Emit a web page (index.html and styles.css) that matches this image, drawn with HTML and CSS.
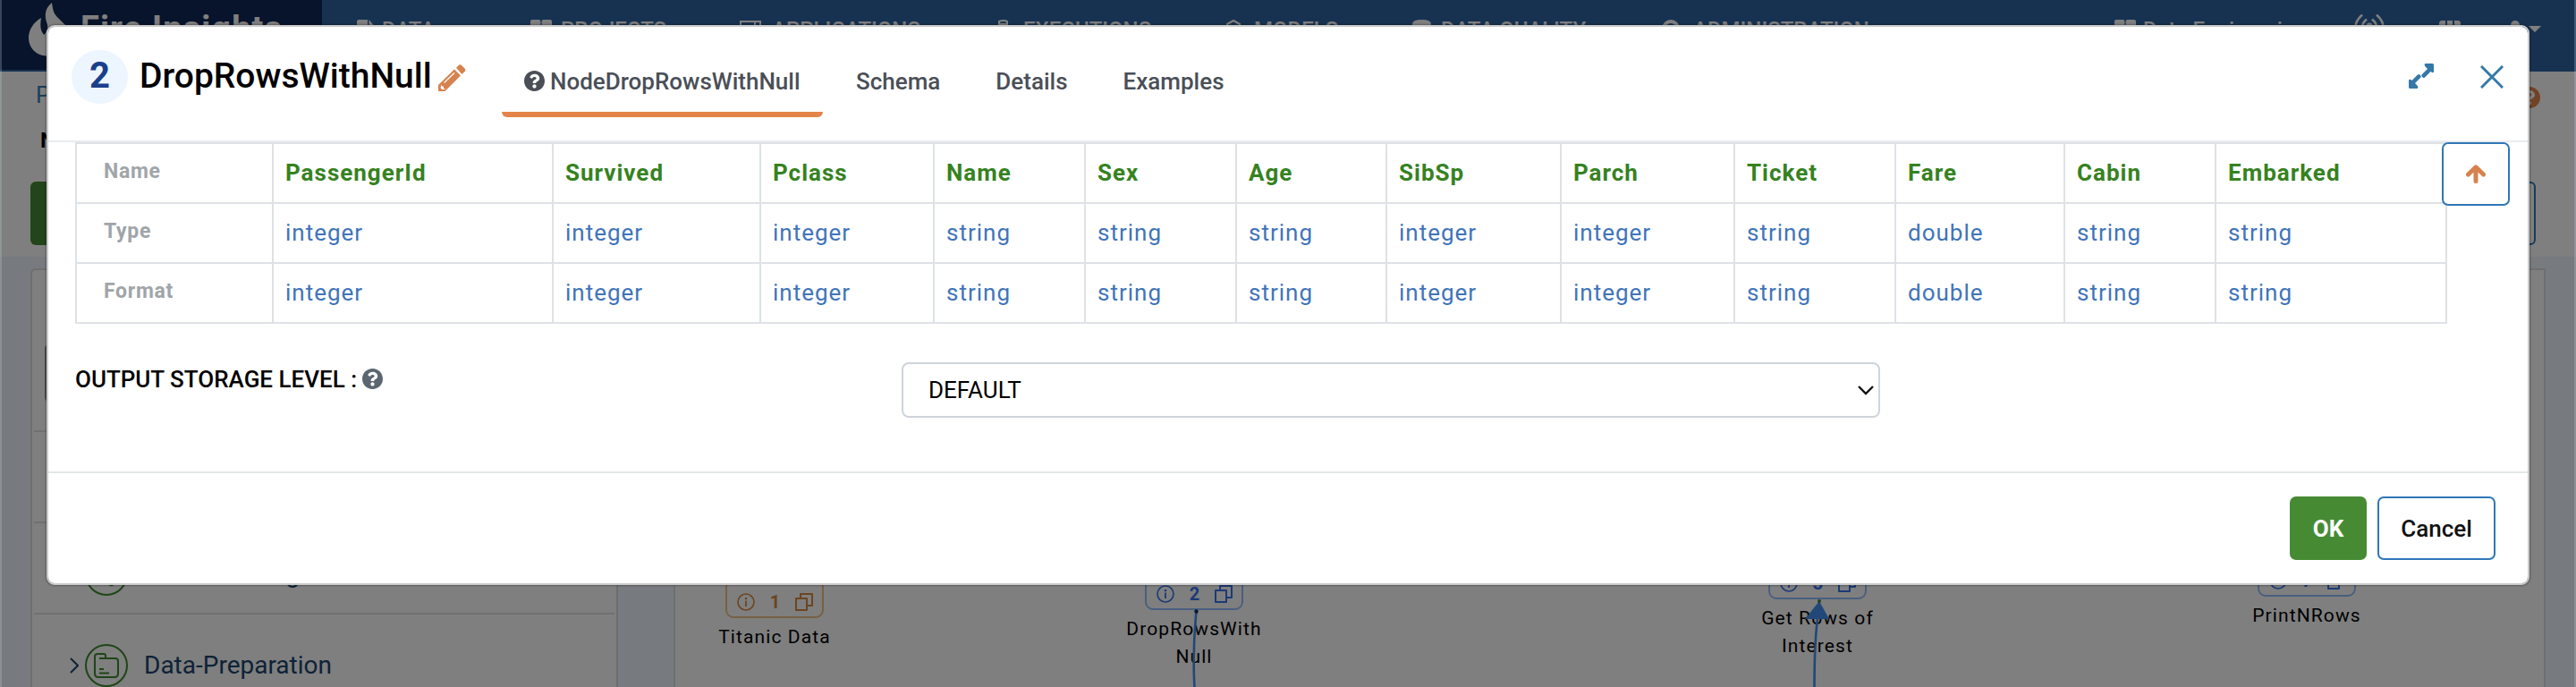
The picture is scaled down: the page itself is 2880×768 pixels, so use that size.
FILE: index.html
```html
<!DOCTYPE html>
<html lang="en">
<head>
<meta charset="utf-8">
<title>Fire Insights</title>
<link rel="stylesheet" href="styles.css">
</head>
<body>
<svg class="defs" width="0" height="0" aria-hidden="true">
  <symbol id="question" viewBox="8 8 496 496"><path d="M504 256c0 136.997-111.043 248-248 248S8 392.997 8 256C8 119.083 119.043 8 256 8s248 111.083 248 248zM262.655 90c-54.497 0-89.255 22.957-116.549 63.758-3.536 5.286-2.353 12.415 2.715 16.258l34.699 26.31c5.205 3.947 12.621 3.008 16.665-2.122 17.864-22.658 30.113-35.797 57.303-35.797 20.429 0 45.698 13.148 45.698 32.958 0 14.976-12.363 22.667-32.534 33.976C247.128 238.528 216 254.941 216 296v4c0 6.627 5.373 12 12 12h56c6.627 0 12-5.373 12-12v-1.333c0-28.462 83.186-29.647 83.186-106.667 0-58.002-60.165-102-116.531-102zM256 338c-25.365 0-46 20.635-46 46 0 25.364 20.635 46 46 46s46-20.636 46-46c0-25.364-20.635-46-46-46z"/></symbol>
  <symbol id="info" viewBox="0 0 20 20"><circle cx="10" cy="10" r="9" fill="none" stroke="currentColor" stroke-width="1.6"/><path d="M9.1 8.5h1.8v6.5H9.1zM8.9 5h2.2v2.2H8.9z"/></symbol>
  <symbol id="copy" viewBox="0 0 20 20"><path d="M1 6h12v13H1zM6 5V1h13v13h-5" fill="none" stroke="currentColor" stroke-width="2" stroke-linejoin="round"/></symbol>
  <symbol id="windows" viewBox="0 0 24 22"><rect width="11.4" height="10" rx="2"/><rect x="12.6" width="11.4" height="10" rx="2"/><rect y="11.5" width="11.4" height="10" rx="2"/><rect x="12.6" y="11.5" width="11.4" height="10" rx="2"/></symbol>
</svg>

<div class="page">
  <header class="topbar">
    <div class="brand">
      <svg class="flame" viewBox="0 0 52 60"><path d="M26 0c-8 6-8.500 15-5.500 23 1.500 4 .5 8-3 13-4-4-5-9-3.500-19C5 22 0 31 0 39c0 12 9 20.500 21 20.500S52 52 46 32C43 24 31 18 28 10c-1-3-1.500-7-2-10z"/></svg>
      <span class="brand-name">Fire Insights</span>
    </div>
    <nav class="menu">
      <a class="menu-item"><svg width="20" height="24" viewBox="0 0 20 24"><path d="M1.500 0H12v9h8v15H0V1.500zM13.500 0 20 7.500h-6.500z"/></svg>DATA</a>
      <a class="menu-item"><svg width="26" height="22" viewBox="0 0 26 22"><use href="#windows" width="24" height="22"/></svg>PROJECTS</a>
      <a class="menu-item"><svg width="28" height="22" viewBox="0 0 28 22"><path d="M1 2h22v18H1zM1 7h22M17 2v5" fill="none" stroke="currentColor" stroke-width="2"/></svg>APPLICATIONS</a>
      <a class="menu-item"><svg width="20" height="24" viewBox="0 0 20 24"><path d="M1 2q5-2 9 0v20H1zM1 5h9" fill="none" stroke="currentColor" stroke-width="2"/></svg>EXECUTIONS</a>
      <a class="menu-item"><svg width="23" height="22" viewBox="0 0 23 22"><path d="m8 1 7 4v9l-7 4-7-4V5zM4.500 6.500 8 8.500l3.500-2" fill="none" stroke="currentColor" stroke-width="2.200"/></svg>MODELS</a>
      <a class="menu-item"><svg width="24" height="24" viewBox="0 0 24 24"><path d="M0 5q0-5 10.500-5T21 5v14q0 4-10.500 4T0 19z"/></svg>DATA QUALITY</a>
      <a class="menu-item"><svg width="28" height="24" viewBox="0 0 28 24"><circle cx="11" cy="10" r="8" fill="none" stroke="currentColor" stroke-width="4"/></svg>ADMINISTRATION</a>
      <a class="menu-item"><svg width="24" height="22" viewBox="0 0 24 22"><use href="#windows" width="24" height="22"/></svg>Data Engineering</a>
      <a class="menu-item signal"><svg width="34" height="30" viewBox="0 0 34 30"><g fill="none" stroke="currentColor" stroke-width="2.600"><path d="M9 .5Q-6 14 9 27.500M25 .5q15 13.500 0 27M14 5.500q-10 8.500 0 17M20 5.500q10 8.500 0 17"/></g><circle cx="17" cy="13" r="3.500"/></svg></a>
      <a class="menu-item"><svg width="24" height="24" viewBox="0 0 24 24"><path d="M2 1h5v6H0V3zM9 1h6v6H9zM17 1h5l2 2v4h-7zM0 9h7v6H0zM9 9h6v6H9zM17 9h7v6h-7z"/></svg></a>
      <a class="menu-item user"><svg width="34" height="24" viewBox="0 0 34 24"><circle cx="5" cy="5" r="5"/><path d="M0 24v-8q5-6 10 0v8zM20 6h14l-7 7z"/></svg></a>
    </nav>
  </header>

  <section class="toolbar">
    <div class="crumbs"><span>Projects</span><svg class="crumb-help" width="24" height="24"><use href="#question"/></svg></div>
    <div class="flow-name">NewWorkflow</div>
    <div class="actions"><span class="action-solid"></span><span class="action-line"></span></div>
  </section>

  <main class="workspace-area">
    <aside class="processors">
      <div class="search"><span class="search-box"></span></div>
      <div class="category"></div>
      <div class="category">
        <svg class="chevron" width="10" height="18" viewBox="0 0 10 18"><path d="m1 1 8 8-8 8" fill="none" stroke="currentColor" stroke-width="2"/></svg>
        <svg class="category-icon" width="48" height="48" viewBox="0 0 48 48" stroke="currentColor" stroke-width="2"><circle cx="24" cy="24" r="23"/><path d="M15 33h18M27 35q3 3 6-1"/></svg>
        <span>Data-Cleaning</span>
      </div>
      <div class="category">
        <svg class="chevron" width="10" height="18" viewBox="0 0 10 18"><path d="m1 1 8 8-8 8" fill="none" stroke="currentColor" stroke-width="2"/></svg>
        <svg class="category-icon" width="48" height="48" viewBox="0 0 48 48" stroke="currentColor" stroke-width="2"><circle cx="24" cy="24" r="23"/><path d="M16 16h18q3 0 3 3v14q0 4-4 4H15q-4 0-4-4V14q0-3 3-3h7q2 0 2 2v3M16 28h5M16 32.500h11"/></svg>
        <span>Data-Preparation</span>
      </div>
    </aside>
    <div class="canvas">
      <svg class="links" width="2089" height="467" viewBox="755 301 2089 467">
        <path d="M1337.500 682C1336 700 1333 725 1335.500 768" fill="none" stroke="#4290f0" stroke-width="2.600"/>
        <path d="M2032 690C2029 715 2028.500 740 2028.500 768" fill="none" stroke="#4290f0" stroke-width="2.600"/>
        <path d="M2034 671 2045 691 2018 691z" fill="#4290f0"/>
        <circle cx="1337.500" cy="682.500" r="2.200" fill="#10305c"/><circle cx="2034" cy="671" r="2" fill="#3c8c30"/>
      </svg>
      <div class="node node-titanic"><div class="badge badge-orange"><svg><use href="#info"/></svg><b>1</b><svg><use href="#copy"/></svg></div><span>Titanic Data</span></div>
      <div class="node node-drop"><div class="badge"><svg><use href="#info"/></svg><b>2</b><svg><use href="#copy"/></svg></div><span>DropRowsWith<br>Null</span></div>
      <div class="node node-rows"><div class="badge"><svg><use href="#info"/></svg><b>3</b><svg><use href="#copy"/></svg></div><span>Get Rows of<br>Interest</span></div>
      <div class="node node-print"><div class="badge"><svg><use href="#info"/></svg><b>7</b><svg><use href="#copy"/></svg></div><span>PrintNRows</span></div>
    </div>
  </main>
</div>

<div class="overlay">
  <div class="modal" role="dialog">
    <header class="modal-head">
      <span class="step">2</span>
      <h1 class="modal-title">DropRowsWithNull</h1>
      <svg class="pencil" width="31" height="32" viewBox="0 0 31 32"><path d="M18 6.500 25 13.500 7.500 31H1q-1 0-1-1v-6z"/><path d="m20 4.800 2.500-2.600q1.800-1.800 3.800 0l3.200 3.300q1.800 1.800 0 3.600L26.500 12z"/><path d="M6.500 21.500 18 10.500" stroke="#fff" stroke-width="1.200"/><path d="M4 23v2.500h2V28h2.500l-2 1H4l-1.500-2z" fill="#fff"/></svg>
      <nav class="tabs">
        <a class="tab active"><svg width="23" height="23"><use href="#question"/></svg>NodeDropRowsWithNull</a>
        <a class="tab">Schema</a>
        <a class="tab">Details</a>
        <a class="tab">Examples</a>
      </nav>
      <svg class="expand" width="28" height="28" viewBox="0 0 28 28"><path d="M18.500 0h8Q28 0 28 1.500v8q-1.500 1.500-3.500-.5L18 15.500q-1.200 1-2.300 0l-1-1q-1-1.200 0-2.300L21 6l-2-2q-2.500-2.500-.5-4zM9.500 28h-8Q0 28 0 26.500v-8q1.500-1.500 3.500.5L10 12.500q1.200-1 2.300 0l1 1q1 1.200 0 2.300L7 22l2 2q2.500 2.500.5 4z"/></svg>
      <svg class="close" width="26" height="26" viewBox="0 0 26 26"><path d="m1 1 24 24M25 1 1 25" stroke="currentColor" stroke-width="3"/></svg>
    </header>

    <div class="modal-body">
      <div class="schema">
        <span class="label">Name</span><b>PassengerId</b><b>Survived</b><b>Pclass</b><b>Name</b><b>Sex</b><b>Age</b><b>SibSp</b><b>Parch</b><b>Ticket</b><b>Fare</b><b>Cabin</b><b>Embarked</b>
        <span class="label">Type</span><i>integer</i><i>integer</i><i>integer</i><i>string</i><i>string</i><i>string</i><i>integer</i><i>integer</i><i>string</i><i>double</i><i>string</i><i>string</i>
        <span class="label">Format</span><i>integer</i><i>integer</i><i>integer</i><i>string</i><i>string</i><i>string</i><i>integer</i><i>integer</i><i>string</i><i>double</i><i>string</i><i>string</i>
      </div>
      <button class="scroll-top"><svg width="22" height="21" viewBox="0 0 22 21"><path d="M11 18.500V3M2.500 11 11 2.800l8.500 8.200" fill="none" stroke="currentColor" stroke-width="5" stroke-linecap="round" stroke-linejoin="round"/></svg></button>
      <div class="field">
        <label class="field-label">OUTPUT STORAGE LEVEL :<svg width="23" height="23"><use href="#question"/></svg></label>
        <div class="select"><span>DEFAULT</span><svg width="18" height="11" viewBox="0 0 18 11"><path d="m1 1 8 8 8-8" fill="none" stroke="#111" stroke-width="2.400"/></svg></div>
      </div>
    </div>

    <footer class="modal-foot">
      <button class="btn btn-ok">OK</button>
      <button class="btn btn-cancel">Cancel</button>
    </footer>
  </div>
</div>
</body>
</html>
```
FILE: styles.css
```css
* { box-sizing: border-box; }
body { margin: 0; width: 2880px; height: 768px; overflow: hidden; position: relative; font-family: Roboto, "Liberation Sans", sans-serif; color: #000; }
svg { display: block; flex: none; fill: currentColor; }
.defs { position: absolute; }

/* page under the dialog */
.page { display: flex; flex-direction: column; height: 768px; background: #fff; overflow: hidden; }
.topbar { display: flex; height: 80px; flex: none; background: #2e64a2; color: #fff; }
.brand { width: 360px; height: 78px; flex: none; background: #0e2856; display: flex; align-items: flex-start; padding: 3px 0 0 32px; }
.flame { width: 52px; height: 60px; }
.brand-name { margin-left: 6px; font-size: 38px; line-height: 44px; font-weight: 700; letter-spacing: 1.1px; padding-top: 7px; white-space: nowrap; }
.menu { display: grid; grid-template-columns: 194px 234px 289px 255px 208px 278px 507px 268px 95px 80px 60px; padding-left: 39px; align-items: start; }
.menu-item { display: flex; gap: 8px; padding-top: 22px; font-size: 24px; line-height: 22px; font-weight: 500; white-space: nowrap; }
.menu-item.signal { padding-top: 16px; }
.menu-item.user { padding-top: 23px; }

.toolbar { height: 207px; flex: none; padding: 11px 40px 0 34px; }
.crumbs { display: flex; justify-content: space-between; font-size: 26px; line-height: 30px; color: #347eb4; padding-left: 6px; }
.crumb-help { color: #e5844a; margin-top: 6px; }
.flow-name { font-size: 24px; font-weight: 700; line-height: 30px; padding-left: 11px; margin-top: 21px; }
.actions { display: flex; justify-content: space-between; margin: 31px 5px 0 0; }
.action-solid { width: 90px; height: 71px; border-radius: 6px; background: #468b34; }
.action-line { width: 90px; height: 71px; border-radius: 6px; border: 2px solid #2e77b8; }

.workspace-area { flex: 1; min-height: 0; display: flex; gap: 62px; background: #eef4ff; padding: 13px 34px 0 34px; }
.processors { width: 657px; flex: none; border: 2px solid #dcdcdc; border-bottom: 0; border-radius: 6px 6px 0 0; background: #fff; padding: 0 2px; }
.search { height: 179px; padding: 82px 12px 0; }
.search-box { display: block; height: 66px; border: 2px solid #999; border-radius: 6px; }
.category { height: 102px; border-top: 2px solid #e2e2e2; background: #fcfffc; display: flex; align-items: center; padding: 13px 0 0 40px; font-size: 28px; color: #1d4470; }
.category-icon { margin: 0 18px 0 7px; color: #3f8a2e; fill: none; }
.canvas { flex: 1; position: relative; background: #fff; border: 2px solid #dcdfe5; border-bottom: 0; overflow: hidden; }
.links { position: absolute; left: 0; top: 0; z-index: 1; }
.node { position: absolute; width: 180px; text-align: center; font-size: 21px; line-height: 31px; letter-spacing: 1.1px; }
.badge { width: 110px; height: 44px; margin: 0 auto 6px; border: 2px solid #91bfff; border-radius: 9px; color: #3474ee; display: flex; align-items: center; justify-content: space-between; padding: 8px 10px 0 11px; letter-spacing: 0; font-size: 20px; line-height: 20px; }
.badge svg { width: 20px; height: 20px; }
.badge-orange { border-color: #f0c088; color: #d68a40; }
.node-titanic { left: 21px; top: 345px; }
.node-drop { left: 490px; top: 336px; }
.node-rows { left: 1187px; top: 324px; }
.node-print { left: 1734px; top: 321px; }

/* dialog */
.overlay { position: absolute; inset: 0; z-index: 2; background: rgba(0, 0, 0, .5); padding: 28px 52px; box-shadow: inset 2px 0 rgba(200, 215, 230, .25), inset -2px 0 rgba(200, 215, 230, .25); }
.modal { width: 2776px; height: 626px; display: flex; flex-direction: column; background: #fff; background-clip: padding-box; border: 2px solid #cbcbcb; border-radius: 9px; box-shadow: 0 0 2px 1px rgba(0, 0, 0, .3); }
.modal-head { height: 129px; flex: none; border-bottom: 2px solid #e9ecef; display: flex; align-items: flex-start; padding-left: 26px; }
.step { width: 63px; height: 60px; margin-top: 26px; border-radius: 50%; background: #edf5ff; color: #1a3f8b; font-size: 40px; line-height: 58px; font-weight: 700; text-align: center; }
.modal-title { margin: 32px 0 0 13px; font-size: 39px; line-height: 46px; font-weight: 500; width: 334px; white-space: nowrap; }
.pencil { margin-top: 41px; color: #d6824f; }
.tabs { display: flex; margin: 39px 0 0 40px; font-size: 26px; line-height: 44px; font-weight: 500; color: #4a4f57; }
.tab { display: flex; gap: 6px; height: 62px; white-space: nowrap; padding: 0 35px 0 27px; }
.tab.active { width: 359px; padding: 0 0 0 25px; border-bottom: 6px solid #e5844a; border-radius: 0 0 6px 6px; }
.tab.active svg { margin-top: 10px; }
.tab.active + .tab { padding-left: 37px; }
.expand { color: #3578a8; margin: 41px 52px 0 auto; }
.close { color: #3578a8; margin: 43px 27px 0 0; }

.modal-body { position: relative; height: 368px; flex: none; padding-left: 30px; }
.schema { width: 2652px; display: grid; grid-template-columns: 220px 313px 232px 194px 169px 169px 168px 195px 194px 180px 189px 169px 258px; grid-auto-rows: 67px; border: solid #dee2e6; border-width: 2px 0 0 2px; }
.schema > * { border: solid #dee2e6; border-width: 0 2px 2px 0; padding-left: 13px; font-size: 26px; line-height: 64px; letter-spacing: 1px; font-style: normal; color: #4174b9; white-space: nowrap; }
.schema b { color: #36821f; }
.schema .label { padding-left: 30px; font-size: 23px; line-height: 61px; font-weight: 700; letter-spacing: .7px; color: #a0a5a9; }
.scroll-top { position: absolute; left: 2676px; top: 0; width: 76px; height: 71px; border: 2px solid #3176b5; border-radius: 7px; background: #fff; color: #d6824f; display: flex; align-items: center; justify-content: center; padding: 0; }
.field { display: flex; margin-top: 43px; }
.field-label { width: 924px; display: flex; gap: 6px; font-size: 26px; line-height: 38px; font-weight: 500; }
.field-label svg { color: #5c6670; margin-top: 7px; }
.select { width: 1094px; height: 62px; border: 2px solid #ced4da; border-radius: 8px; display: flex; align-items: center; justify-content: space-between; padding: 0 5px 0 28px; font-size: 26px; }
.modal-foot { flex: 1; border-top: 2px solid #e5e7e9; display: flex; justify-content: flex-end; gap: 12px; padding: 26px 36px 0 0; }
.btn { height: 71px; border-radius: 7px; font: 500 26px/1 Roboto, sans-serif; padding: 0; }
.btn-ok { width: 86px; border: 0; background: #468b34; color: #fff; font-weight: 700; }
.btn-cancel { width: 132px; border: 2px solid #2e77b8; background: #fff; color: #111; }
```
